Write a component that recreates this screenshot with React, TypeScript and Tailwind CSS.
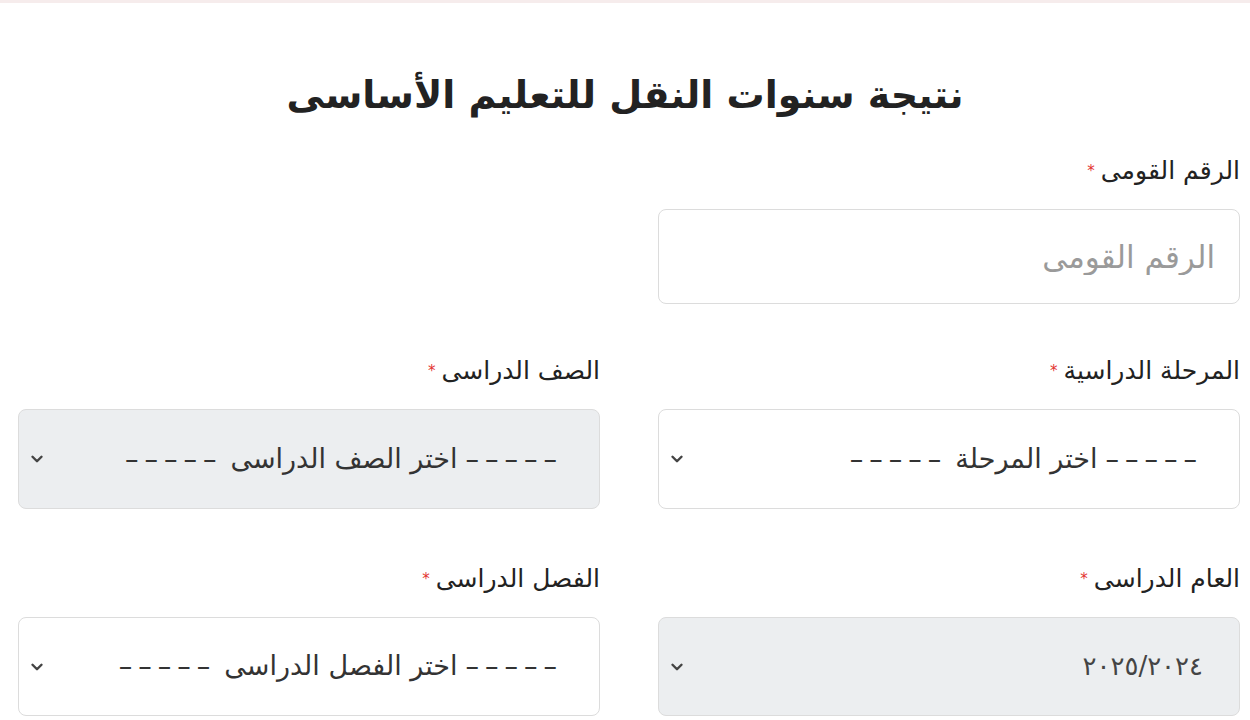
import { ChevronDown } from "lucide-react";

const FONT = { fontFamily: '"DejaVu Sans", "Noto Sans", sans-serif' };

type FieldProps = {
  label: string;
  children: React.ReactNode;
};

const Field = ({ label, children }: FieldProps) => (
  <div className="flex flex-col gap-[10px]">
    <label className="flex h-[56px] items-center gap-[6px] text-[25px] text-[#222]">
      <span>{label}</span>
      <span className="text-[15px] text-[#e3342f]">*</span>
    </label>
    {children}
  </div>
);

// dashes are stretched to the width of the original font
const Dashes = () => (
  <span className="tracking-[6px]">–––––</span>
);

type SelectBoxProps = {
  value?: string;
  option?: string;
  disabled?: boolean;
  height: string;
};

const SelectBox = ({ value, option, disabled, height }: SelectBoxProps) => (
  <div
    className={`flex items-center justify-between rounded-lg border border-[#dcdcdc] pr-[36px] pl-[9px] text-[27px] text-[#333] ${height} ${
      disabled ? "bg-[#eceef0]" : "bg-white"
    }`}
  >
    {option ? (
      <span className="flex items-center gap-[8px] whitespace-nowrap">
        <Dashes />
        <span>{option}</span>
        <Dashes />
      </span>
    ) : (
      <span className="text-[26px] text-[#444]">{value}</span>
    )}
    <ChevronDown size={18} strokeWidth={3.2} className="text-[#444]" />
  </div>
);

const App = () => {
  return (
    <div
      dir="rtl"
      style={FONT}
      className="min-h-[720px] overflow-hidden border-t-[3px] border-[#f6ecec] bg-white"
    >
      <h1 className="pt-[64px] pb-[20px] text-center text-[38px] leading-[56px] font-bold text-[#222]">
        نتيجة سنوات النقل للتعليم الأساسى
      </h1>

      <div className="grid grid-cols-2 gap-x-[58px] pr-[10px] pl-[18px]">
        <Field label="الرقم القومى">
          <input
            className="h-[95px] rounded-lg border border-[#dcdcdc] bg-white px-[24px] text-[31px] text-[#333] outline-none placeholder:text-[#9a9a9a]"
            placeholder="الرقم القومى"
          />
        </Field>
        <div />

        <div className="mt-[39px]">
          <Field label="المرحلة الدراسية">
            <SelectBox option="اختر المرحلة" height="h-[100px]" />
          </Field>
        </div>
        <div className="mt-[39px]">
          <Field label="الصف الدراسى">
            <SelectBox option="اختر الصف الدراسى" height="h-[100px]" disabled />
          </Field>
        </div>

        <div className="mt-[42px]">
          <Field label="العام الدراسى">
            <SelectBox value="٢٠٢٥/٢٠٢٤" height="h-[99px]" disabled />
          </Field>
        </div>
        <div className="mt-[42px]">
          <Field label="الفصل الدراسى">
            <SelectBox option="اختر الفصل الدراسى" height="h-[99px]" />
          </Field>
        </div>
      </div>
    </div>
  );
};

export default App;
